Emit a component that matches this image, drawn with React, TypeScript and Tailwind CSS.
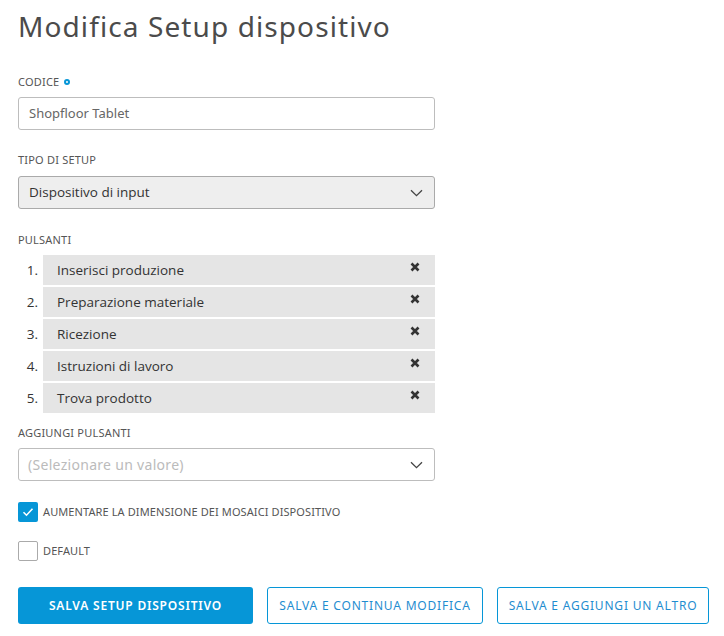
import React from "react";

const items = [
  "Inserisci produzione",
  "Preparazione materiale",
  "Ricezione",
  "Istruzioni di lavoro",
  "Trova prodotto",
];

function Chevron() {
  return (
    <svg width="13" height="8" viewBox="0 0 13 8" fill="none">
      <path d="M1 1.2l5.5 5.5 5.5-5.5" stroke="#444" strokeWidth="1.3" />
    </svg>
  );
}

function XIcon() {
  return (
    <svg width="10" height="10" viewBox="0 0 10 10">
      <path d="M1.5 1.5l7 7M8.5 1.5l-7 7" stroke="#333" strokeWidth="2.6" strokeLinecap="butt" />
    </svg>
  );
}

function Label({ children }: { children: React.ReactNode }) {
  return (
    <div className="h-[14px] leading-[14px] text-[11px] text-[#555] tracking-[0.2px] flex items-center">
      {children}
    </div>
  );
}

export default function App() {
  const sans = { fontFamily: '"Noto Sans", "Open Sans", sans-serif' };
  return (
    <div className="bg-white w-[724px] h-[636px] pl-[18px] pt-[7px]" style={sans}>
      <h1 className="text-[28px] leading-[38px] text-[#4b4b4b] tracking-[1.1px] m-0 font-normal">
        Modifica Setup dispositivo
      </h1>
      <div className="w-[417px] mt-[30px]">
        <Label>
          CODICE
          <span className="ml-[5px] inline-block w-[6px] h-[6px] rounded-full border-[2px] border-[#0696d7]"></span>
        </Label>
        <div className="mt-[8px] h-[33px] border border-[#bdbdbd] rounded-[3px] flex items-center pl-[10px] text-[13px] text-[#666]">
          Shopfloor Tablet
        </div>

        <div className="mt-[23px]">
          <Label>TIPO DI SETUP</Label>
        </div>
        <div
          className="mt-[9px] h-[33px] border border-[#aaa] bg-[#eeeeee] rounded-[3px] flex items-center justify-between pl-[10px] pr-[11px] text-[14px] text-[#333]"
          style={{ fontFamily: '"Open Sans", sans-serif' }}
        >
          <span className="text-[13.5px]">Dispositivo di input</span>
          <Chevron />
        </div>

        <div className="mt-[24px]">
          <Label>PULSANTI</Label>
        </div>
        <div className="mt-[8px] flex flex-col gap-[2px]" style={{ fontFamily: '"Open Sans", sans-serif' }}>
          {items.map((t, i) => (
            <div key={t} className="flex h-[30px]">
              <div className="w-[25px] pr-[5px] text-right text-[13.5px] text-[#333] leading-[30px]">{i + 1}.</div>
              <div className="flex-1 bg-[#e5e5e5] flex items-center justify-between pl-[14px] pr-[15px] text-[13.5px] text-[#333]">
                <span>{t}</span>
                <span className="mb-[6px]"><XIcon /></span>
              </div>
            </div>
          ))}
        </div>

        <div className="mt-[13px]">
          <Label>AGGIUNGI PULSANTI</Label>
        </div>
        <div className="mt-[8px] h-[33px] border border-[#bdbdbd] rounded-[3px] flex items-center justify-between pl-[9px] pr-[11px] text-[14px] text-[#bbb] tracking-[0.3px]">
          <span>(Selezionare un valore)</span>
          <Chevron />
        </div>

        <div className="mt-[21px] flex items-center h-[20px]">
          <div className="w-[20px] h-[20px] bg-[#0696d7] rounded-[2px] flex items-center justify-center">
            <svg width="12" height="10" viewBox="0 0 12 10" fill="none">
              <path d="M1.5 5.2l3 3 6-6.5" stroke="white" strokeWidth="1.6" />
            </svg>
          </div>
          <span className="ml-[5px] text-[11px] text-[#555] tracking-[0.1px]">AUMENTARE LA DIMENSIONE DEI MOSAICI DISPOSITIVO</span>
        </div>
        <div className="mt-[19px] flex items-center h-[20px]">
          <div className="w-[20px] h-[20px] border border-[#aaa] rounded-[2px]"></div>
          <span className="ml-[5px] text-[11px] text-[#555] tracking-[0.1px]">DEFAULT</span>
        </div>
      </div>

      <div className="mt-[26px] flex gap-[14px] text-[12px] tracking-[0.8px]">
        <button className="w-[235px] h-[37px] bg-[#0696d7] rounded-[3px] text-white font-semibold">
          SALVA SETUP DISPOSITIVO
        </button>
        <button className="w-[216px] h-[37px] border border-[#0696d7] rounded-[3px] text-[#1f8dd0] bg-white">
          SALVA E CONTINUA MODIFICA
        </button>
        <button className="w-[212px] h-[37px] border border-[#0696d7] rounded-[3px] text-[#1f8dd0] bg-white">
          SALVA E AGGIUNGI UN ALTRO
        </button>
      </div>
    </div>
  );
}
